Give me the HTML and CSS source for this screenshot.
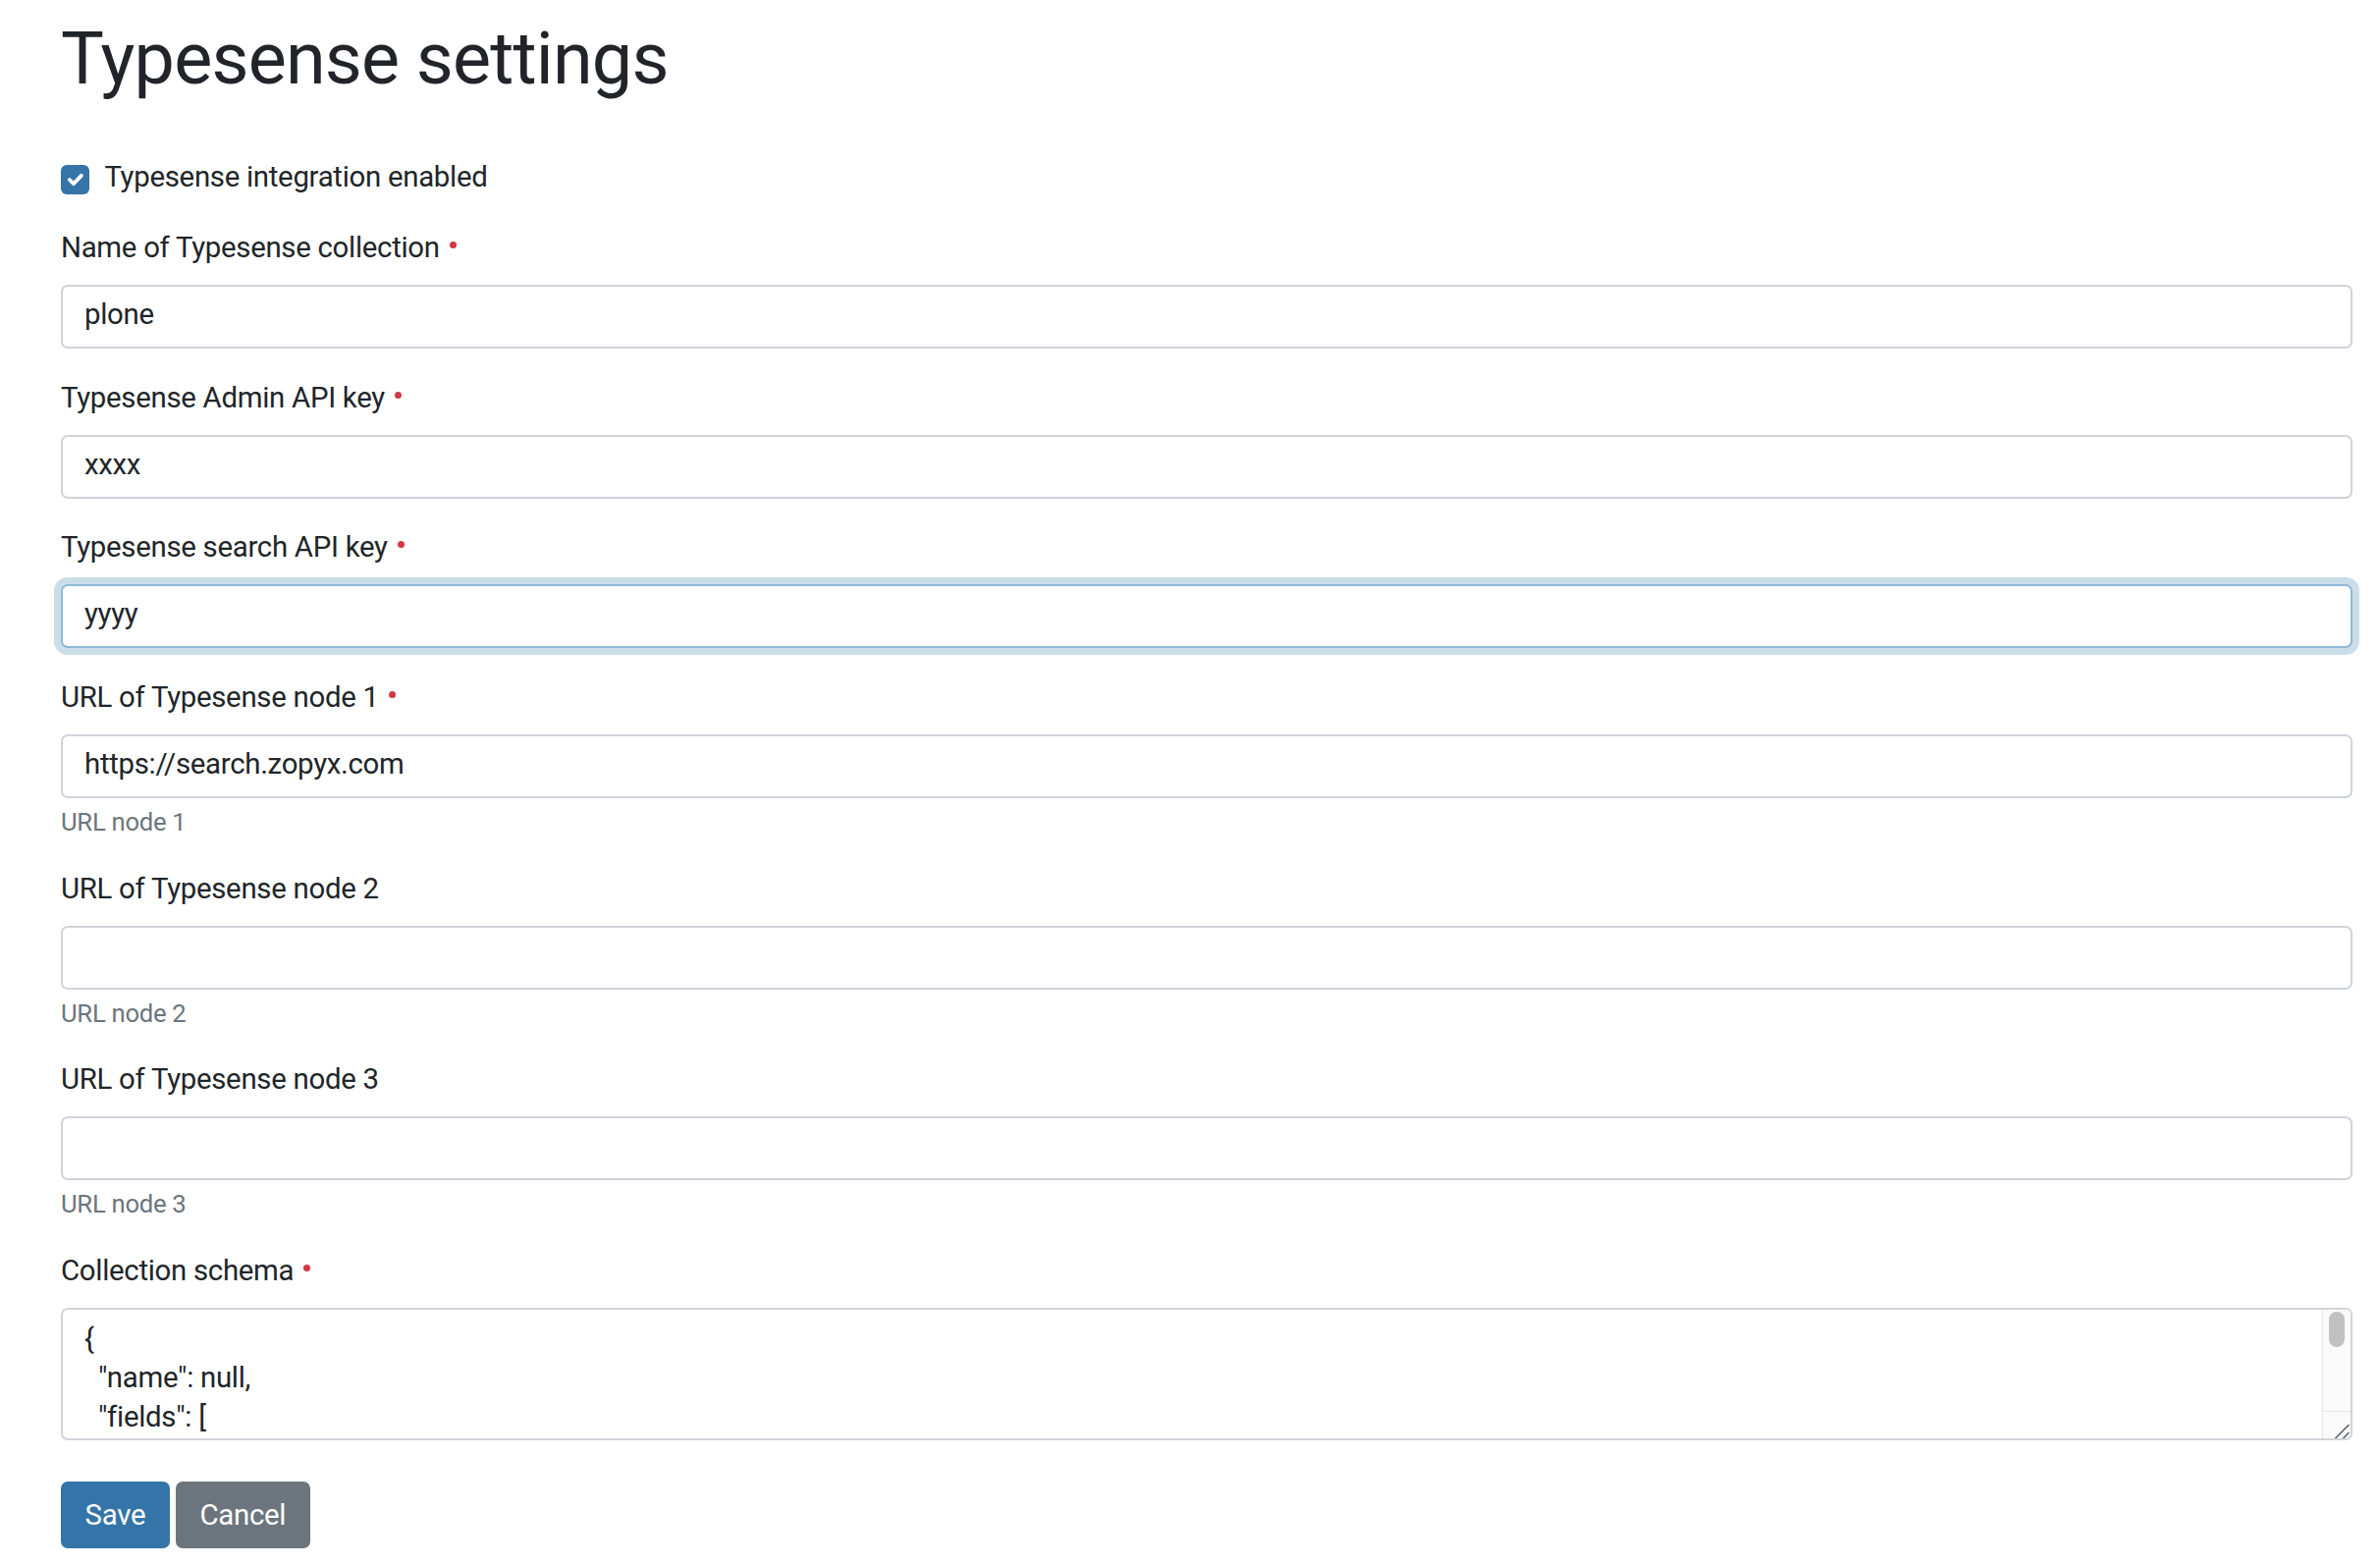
FILE: index.html
```html
<!DOCTYPE html>
<html lang="en">
<head>
<meta charset="utf-8">
<title>Typesense settings</title>
<link rel="stylesheet" href="styles.css">
</head>
<body>
<div class="page">
  <h1 class="title">Typesense settings</h1>
  <form class="settings-form">
    <div class="form-check">
      <span class="check-box" role="checkbox" aria-checked="true">
        <svg viewBox="0 0 20 20" aria-hidden="true"><path d="M6 10.2l2.8 2.8L14.2 7.4" fill="none" stroke="#fff" stroke-width="2.6" stroke-linecap="round" stroke-linejoin="round"/></svg>
      </span>
      <label class="check-label">Typesense integration enabled</label>
    </div>

    <div class="field">
      <label class="field-label">Name of Typesense collection<span class="req"></span></label>
      <input class="text-input" type="text" value="plone">
    </div>

    <div class="field">
      <label class="field-label">Typesense Admin API key<span class="req"></span></label>
      <input class="text-input" type="text" value="xxxx">
    </div>

    <div class="field">
      <label class="field-label">Typesense search API key<span class="req"></span></label>
      <input class="text-input focus" type="text" value="yyyy">
    </div>

    <div class="field has-help">
      <label class="field-label">URL of Typesense node 1<span class="req"></span></label>
      <input class="text-input" type="text" value="https://search.zopyx.com">
      <div class="help">URL node 1</div>
    </div>

    <div class="field has-help">
      <label class="field-label">URL of Typesense node 2</label>
      <input class="text-input" type="text" value="">
      <div class="help">URL node 2</div>
    </div>

    <div class="field has-help">
      <label class="field-label">URL of Typesense node 3</label>
      <input class="text-input" type="text" value="">
      <div class="help">URL node 3</div>
    </div>

    <div class="field field-last">
      <label class="field-label">Collection schema<span class="req"></span></label>
      <div class="textarea-wrap">
        <textarea class="schema" readonly>{
  "name": null,
  "fields": [
    {
      "name": ".*",
      "type": "auto"
    }
  ]
}</textarea>
        <div class="vscroll" aria-hidden="true">
          <div class="track"><div class="thumb"></div></div>
          <div class="resizer">
            <svg viewBox="0 0 28 28" width="28" height="28"><path d="M12 27.5L26.5 13M20 27.5L26.5 21" stroke="#555" stroke-width="1.4" fill="none"/></svg>
          </div>
        </div>
      </div>
    </div>

    <div class="actions">
      <button type="button" class="btn btn-primary">Save</button>
      <button type="button" class="btn btn-secondary">Cancel</button>
    </div>
  </form>
</div>
</body>
</html>
```

FILE: styles.css
```css
* { box-sizing: border-box; }

html, body {
  margin: 0;
  background: #fff;
}

body {
  font-family: Roboto, "Liberation Sans", Arial, sans-serif;
  font-size: 29.4px;
  line-height: 44.1px;
  letter-spacing: -0.01em;
  color: #212529;
}

.page {
  padding: 16px 28px 16px 62px;
}

.title {
  font-size: 73.7px;
  line-height: 88.4px;
  font-weight: 400;
  letter-spacing: -0.011em;
  margin: 0 0 53.5px;
}

.form-check {
  display: flex;
  align-items: flex-start;
  gap: 15px;
  margin-bottom: 28.2px;
}

.check-box {
  flex: none;
  width: 29.4px;
  height: 29.4px;
  margin-top: 10.4px;
  background: #3574a8;
  border-radius: 6px;
  display: flex;
  align-items: center;
  justify-content: center;
}

.check-box svg {
  width: 29.4px;
  height: 29.4px;
  display: block;
}

.field {
  margin-bottom: 27.5px;
}

.field.has-help {
  margin-bottom: 26px;
}

.field.field-last {
  margin-bottom: 0;
}

.field-label {
  display: block;
  margin-bottom: 16px;
}

.req {
  display: inline-block;
  width: 7px;
  height: 7px;
  border-radius: 50%;
  background: #d13843;
  margin-left: 10px;
  margin-bottom: 9px;
  vertical-align: baseline;
}

.text-input {
  display: block;
  width: 100%;
  height: 65px;
  margin: 0;
  border: 2px solid #ced4da;
  border-radius: 7px;
  padding: 0 22px 5px;
  font: inherit;
  letter-spacing: inherit;
  color: #212529;
  background: #fff;
  outline: none;
}

.text-input.focus {
  border-color: #8fb9d5;
  box-shadow: 0 0 0 7px #cadde9;
}

.help {
  font-size: 25.7px;
  line-height: 38.6px;
  color: #6c757d;
  margin-top: 5px;
}

.textarea-wrap {
  display: flex;
  height: 134.4px;
  border: 2px solid #ced4da;
  border-radius: 7px;
  overflow: hidden;
  background: #fff;
}

.schema {
  flex: 1;
  min-width: 0;
  width: auto;
  margin: 0;
  border: 0;
  resize: none;
  overflow: hidden;
  padding: 10.5px 22px 0;
  font: inherit;
  letter-spacing: inherit;
  line-height: 39.5px;
  color: #212529;
  background: transparent;
  outline: none;
}

.vscroll {
  flex: none;
  width: 29px;
  display: flex;
  flex-direction: column;
  border-left: 1px solid #e6e6e6;
  background: #fafafa;
}

.track {
  flex: 1;
  padding: 2px 6px;
}

.thumb {
  height: 36px;
  border-radius: 8px;
  background: #c1c1c1;
}

.resizer {
  height: 28px;
  border-top: 1px solid #e6e6e6;
}

.resizer svg {
  display: block;
}

.actions {
  display: flex;
  gap: 6.3px;
  margin-top: 42.5px;
}

.btn {
  height: 68px;
  padding: 0 24.5px;
  border: 0;
  border-radius: 7px;
  font: inherit;
  letter-spacing: inherit;
  color: #fff;
  cursor: pointer;
}

.btn-primary { background: #3574a8; }
.btn-secondary { background: #6c757d; }
```
